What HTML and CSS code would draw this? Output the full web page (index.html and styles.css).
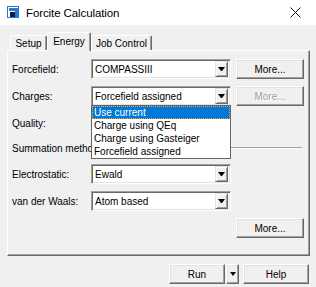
FILE: index.html
```html
<!DOCTYPE html>
<html lang="en">

<head>
    <meta charset="UTF-8" />
    <title>Forcite Calculation</title>
    <link rel="stylesheet" href="styles.css">
</head>

<body>
    <div class="window">
        <!-- 标题栏 -->
        <div class="titlebar">
            <svg class="app-icon" width="12" height="12" viewBox="0 0 12 12">
                <rect width="12" height="12" fill="#2a78cf" />
                <rect x="1" y="1" width="10" height="10" fill="#fff" />
                <rect x="2" y="2" width="9" height="9" fill="#2a78cf" />
                <rect x="2" y="5" width="6" height="6" fill="#fff" />
                <rect x="3" y="6" width="5" height="5" fill="#0d1f3a" />
            </svg>
            <span class="title">Forcite Calculation</span>
            <svg class="close" width="11" height="11" viewBox="0 0 11 11">
                <path d="M0.5 0.5L10.5 10.5M10.5 0.5L0.5 10.5" stroke="#111" stroke-width="1" fill="none" />
            </svg>
        </div>

        <!-- 选项卡 -->
        <div class="tabs">
            <div class="tab tab-setup">Setup</div>
            <div class="tab tab-energy active">Energy</div>
            <div class="tab tab-job">Job Control</div>
        </div>

        <div class="panel">
            <div class="row">
                <span class="label">Forcefield:</span>
                <div class="combo"><span class="value">COMPASSIII</span><span class="arrow"></span></div>
                <button class="btn more">More...</button>
            </div>

            <div class="row">
                <span class="label">Charges:</span>
                <div class="combo">
                    <span class="value">Forcefield assigned</span><span class="arrow"></span>
                    <!-- 下拉列表 -->
                    <ul class="drop-list">
                        <li class="item selected">Use current</li>
                        <li class="item">Charge using QEq</li>
                        <li class="item">Charge using Gasteiger</li>
                        <li class="item">Forcefield assigned</li>
                    </ul>
                </div>
                <button class="btn more disabled">More...</button>
            </div>

            <div class="row">
                <span class="label">Quality:</span>
            </div>

            <div class="row summation">
                <span class="group-title">Summation method</span>
                <span class="group-line"></span>
            </div>

            <div class="row">
                <span class="label">Electrostatic:</span>
                <div class="combo"><span class="value">Ewald</span><span class="arrow"></span></div>
            </div>

            <div class="row">
                <span class="label">van der Waals:</span>
                <div class="combo"><span class="value">Atom based</span><span class="arrow"></span></div>
            </div>

            <div class="row row-end">
                <button class="btn more">More...</button>
            </div>
        </div>

        <!-- 底部按钮 -->
        <div class="footer">
            <div class="split">
                <button class="btn run">Run</button>
                <button class="btn run-arrow"><span class="arrow-glyph"></span></button>
            </div>
            <button class="btn help">Help</button>
        </div>
    </div>
</body>

</html>
```

FILE: styles.css
```css
* {
    margin: 0;
    padding: 0;
    box-sizing: border-box;
}

ul {
    list-style: none;
}

body {
    background-color: #f0f0f0;
    font-family: "Liberation Sans", Arial, sans-serif;
    font-size: 10px;
    color: #000;
}

.window {
    width: 316px;
    height: 287px;
    background-color: #f0f0f0;
}

.titlebar {
    display: flex;
    align-items: center;
    height: 25px;
    padding-left: 7px;
    background-color: #fff;
}

.titlebar .app-icon {
    margin-top: -2px;
}

.titlebar .title {
    margin-left: 7px;
    font-size: 11.5px;
    letter-spacing: -0.1px;
    color: #000;
}

.titlebar .close {
    margin-left: auto;
    margin-right: 15px;
    margin-top: -1px;
}

/* 选项卡 */
.tabs {
    display: flex;
    align-items: flex-end;
    height: 25px;
    padding-left: 10px;
}

.tab {
    display: flex;
    align-items: center;
    justify-content: center;
    height: 15px;
    background-color: #f0f0f0;
    border-top: 1px solid #fff;
    border-left: 1px solid #fff;
    border-right: 1px solid #696969;
    box-shadow: inset -1px 0 #a0a0a0;
    border-radius: 2px 2px 0 0;
    padding-top: 1px;
}

.tab-setup {
    width: 37px;
}

.tab-energy {
    width: 44px;
}

.tab-job {
    width: 61px;
}

.tab.active {
    position: relative;
    z-index: 2;
    height: 19px;
    margin-bottom: -1px;
    padding-bottom: 3px;
}

.panel {
    display: flex;
    flex-direction: column;
    gap: 7px;
    width: 303px;
    height: 206px;
    margin-left: 7px;
    padding: 8px 5px 0 4px;
    border: 1px solid;
    border-color: #fff #696969 #696969 #fff;
    box-shadow: inset -1px -1px #a0a0a0;
}

.row {
    display: flex;
    align-items: center;
    height: 20px;
}

.row-end {
    justify-content: flex-end;
}

.label {
    width: 79px;
}

/* 下拉框 */
.combo {
    position: relative;
    display: flex;
    align-items: center;
    width: 140px;
    height: 20px;
    padding: 2px;
    background-color: #fff;
    border: 1px solid;
    border-color: #a0a0a0 #fff #fff #a0a0a0;
    box-shadow: inset 1px 1px #696969, inset -1px -1px #e3e3e3;
}

.combo .value {
    flex: 1;
    padding-left: 1px;
    white-space: nowrap;
    overflow: hidden;
}

.combo .arrow {
    position: relative;
    width: 13px;
    height: 16px;
    background-color: #f0f0f0;
    border: 1px solid;
    border-color: #e3e3e3 #696969 #696969 #e3e3e3;
    box-shadow: inset 1px 1px #fff, inset -1px -1px #a0a0a0;
}

.combo .arrow::after,
.run-arrow .arrow-glyph {
    content: "";
    display: block;
    width: 1px;
    height: 0;
    margin: 5px auto 0;
    border-left: 3px solid transparent;
    border-right: 3px solid transparent;
    border-top: 4px solid #000;
}

.drop-list {
    position: absolute;
    top: 18px;
    left: -1px;
    z-index: 5;
    width: 140px;
    background-color: #fff;
    border: 1px solid #646464;
}

.drop-list .item {
    height: 13px;
    line-height: 13px;
    padding-left: 2px;
    white-space: nowrap;
}

.drop-list .item.selected {
    background-color: #0078d7;
    color: #fff;
    outline: 1px dotted #f7a340;
    outline-offset: -1px;
}

/* 按钮 */
.btn {
    font-family: "Liberation Sans", Arial, sans-serif;
    font-size: 10px;
    color: #000;
    background-color: #f0f0f0;
    border: 1px solid;
    border-color: #fff #696969 #696969 #fff;
    box-shadow: inset -1px -1px #a0a0a0, inset 1px 1px #e3e3e3;
    height: 20px;
}

.btn.more {
    width: 68px;
    margin-left: 5px;
}

.btn.disabled {
    color: #a0a0a0;
    text-shadow: 1px 1px #fff;
}

.summation {
    margin: -2px 0 -1px;
}

.group-line {
    flex: 1;
    height: 2px;
    margin: 0 2px 0 3px;
    border-top: 1px solid #a0a0a0;
    border-bottom: 1px solid #fff;
}

.footer {
    display: flex;
    justify-content: flex-end;
    padding: 8px 7px 0 0;
}

.split {
    display: flex;
    gap: 1px;
    margin-right: 4px;
}

.btn.run {
    width: 56px;
}

.btn.run-arrow {
    width: 13px;
    padding: 0;
}

.run-arrow .arrow-glyph {
    margin-top: 0;
}

.btn.help {
    width: 66px;
}
```
